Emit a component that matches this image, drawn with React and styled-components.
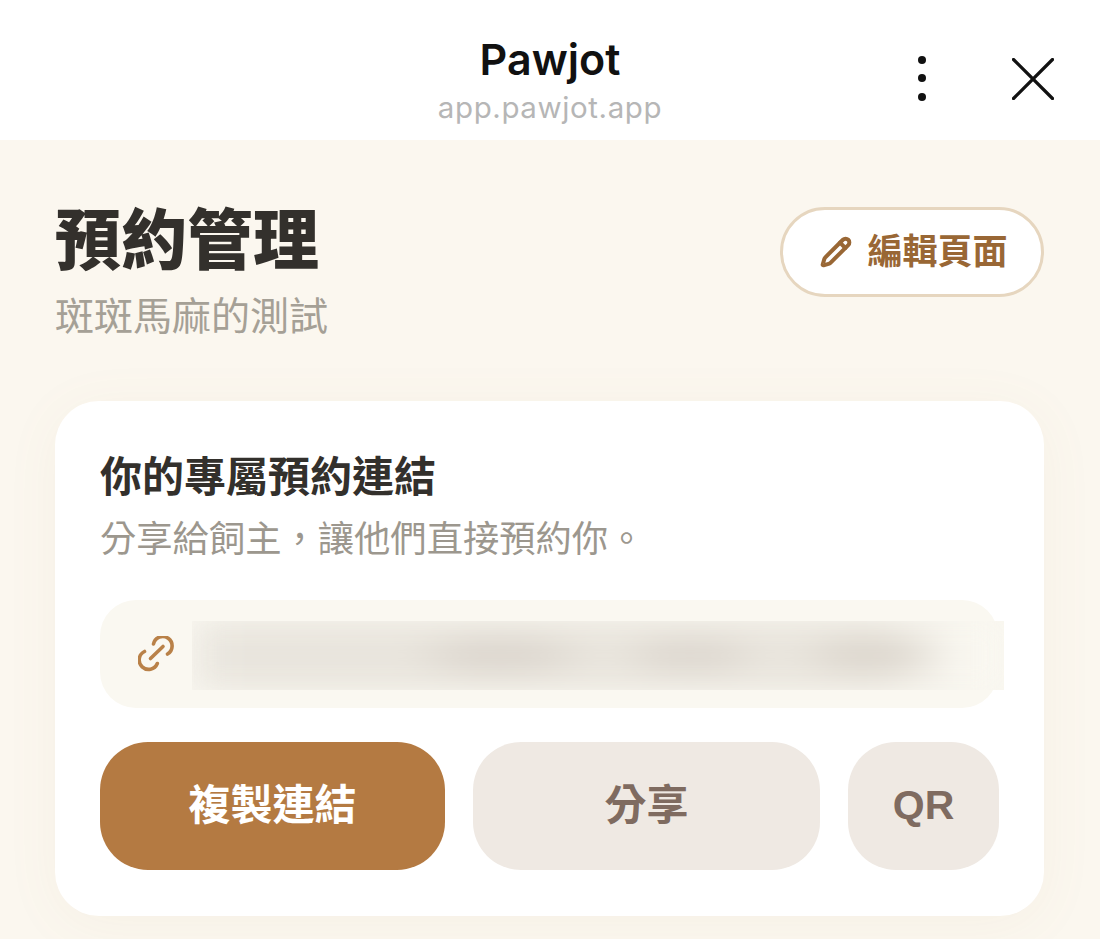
import React from "react";
import styled, { createGlobalStyle } from "styled-components";
import { Pencil } from "lucide-react";

const CJK = `"Noto Sans CJK TC", "Noto Sans", sans-serif`;

const GlobalStyle = createGlobalStyle`
  html, body { margin: 0; padding: 0; background: #fbf7ef; }
  * { box-sizing: border-box; }
`;

const Page = styled.div`
  width: 1100px;
  height: 939px;
  overflow: hidden;
  background: #fbf7ef;
  font-family: ${CJK};
`;

const TopBar = styled.header`
  height: 140px;
  background: #fff;
  display: grid;
  grid-template-columns: 1fr auto 1fr;
  align-items: center;
`;

const TopTitle = styled.div`
  grid-column: 2;
  display: flex;
  flex-direction: column;
  align-items: center;
  padding-top: 20px;
`;

const AppName = styled.div`
  font-family: Inter, sans-serif;
  font-weight: 600;
  font-size: 43px;
  line-height: 50px;
  color: #111;
`;

const AppUrl = styled.div`
  margin-top: 4px;
  font-family: Inter, sans-serif;
  font-size: 29.5px;
  line-height: 38px;
  letter-spacing: 0.6px;
  color: #b6b6b6;
`;

const TopActions = styled.div`
  grid-column: 3;
  display: flex;
  justify-content: flex-end;
  align-items: center;
  gap: 85px;
  padding: 17px 46px 0 0;
`;

const Content = styled.main`
  padding: 57px 56px 0 55px;
`;

const Heading = styled.div`
  display: flex;
  justify-content: space-between;
  align-items: flex-start;
`;

const Title = styled.h1`
  margin: 0;
  font-size: 66px;
  line-height: 76px;
  font-weight: 900;
  color: #33302c;
`;

const Subtitle = styled.p`
  margin: 14px 0 0;
  font-size: 39px;
  line-height: 52px;
  font-weight: 400;
  color: #a5a096;
`;

const EditButton = styled.button`
  width: 264px;
  height: 90px;
  margin-top: 10px;
  padding: 0 0 7px 4px;
  display: flex;
  align-items: center;
  justify-content: center;
  gap: 15px;
  background: #fff;
  border: 3px solid #e6d6bf;
  border-radius: 45px;
  font-family: ${CJK};
  font-size: 35px;
  font-weight: 700;
  color: #996735;
`;

const PencilGlyph = styled(Pencil)`
  position: relative;
  top: 3px;
`;

const Card = styled.section`
  margin-top: 62px;
  height: 515px;
  background: #fff;
  border-radius: 44px;
  padding: 44px 45px 0;
  box-shadow: 0 8px 56px rgba(165, 130, 85, 0.06);
`;

const CardTitle = styled.h2`
  margin: 0;
  font-size: 42px;
  line-height: 58px;
  font-weight: 700;
  color: #33302c;
`;

const CardText = styled.p`
  margin: 8px 0 0;
  font-size: 36.3px;
  line-height: 50px;
  color: #9c978e;
`;

const LinkField = styled.div`
  margin-top: 39px;
  width: 898px;
  height: 108px;
  display: flex;
  align-items: center;
  padding-left: 38px;
  background: #faf8f1;
  border-radius: 36px;
`;

const LinkGlyph = styled.svg`
  flex: none;
`;

const BlurredUrl = styled.div`
  flex: none;
  width: 812px;
  height: 69px;
  margin-left: 18px;
  overflow: hidden;
  background: #f9f7f0;
  position: relative;
  top: 1px;
`;

const UrlSmear = styled.div`
  width: 100%;
  height: 100%;
  filter: blur(14px);
  background:
    radial-gradient(ellipse 100px 24px at 308px 34px, #dcd6ce 0 40%, transparent 100%),
    radial-gradient(ellipse 80px 22px at 498px 34px, #ddd7cf 0 40%, transparent 100%),
    radial-gradient(ellipse 80px 22px at 678px 34px, #dcd6cd 0 40%, transparent 100%),
    linear-gradient(90deg, #eeebe4 0, #e9e5dd 6%, #e9e5dd 84%, #f9f7f0 96%);
`;

const Buttons = styled.div`
  margin-top: 34px;
  display: grid;
  grid-template-columns: 345px 347px 151px;
  column-gap: 28px;
`;

const ActionButton = styled.button`
  height: 128px;
  border: none;
  border-radius: 48px;
  padding: 0 0 ${(p) => (p.$latin ? "2px" : "10px")};
  font-family: ${(p) => (p.$latin ? `"Liberation Sans", sans-serif` : CJK)};
  font-size: ${(p) => (p.$latin ? "41px" : "42px")};
  font-weight: 700;
  color: ${(p) => (p.$primary ? "#fff" : "#7f6b60")};
  background: ${(p) => (p.$primary ? "#b47a42" : "#efe9e3")};
`;

const DotsIcon = () => (
  <svg width="10" height="48" viewBox="0 0 10 48" fill="#111">
    <circle cx="5" cy="5" r="4" />
    <circle cx="5" cy="23" r="4" />
    <circle cx="5" cy="42" r="4" />
  </svg>
);

const CloseIcon = () => (
  <svg width="42" height="42" viewBox="0 0 42 42" stroke="#111" strokeWidth="3.2" strokeLinecap="round">
    <path d="M1.5 1.5 40.5 40.5M40.5 1.5 1.5 40.5" />
  </svg>
);

const LinkIcon = () => (
  <LinkGlyph width="36" height="36" viewBox="0 0 36 36" fill="none" stroke="#b98148" strokeWidth="3.6" strokeLinecap="round">
    <path d="M15.5 8A9.4 9.4 0 1 1 29.5 18" />
    <path d="M19.3 27.5A9.4 9.4 0 1 1 6.5 15.5" />
    <path d="M12.5 22.5 25 10.5" />
  </LinkGlyph>
);

export default function App() {
  return (
    <Page>
      <GlobalStyle />
      <TopBar>
        <TopTitle>
          <AppName>Pawjot</AppName>
          <AppUrl>app.pawjot.app</AppUrl>
        </TopTitle>
        <TopActions>
          <DotsIcon />
          <CloseIcon />
        </TopActions>
      </TopBar>
      <Content>
        <Heading>
          <div>
            <Title>預約管理</Title>
            <Subtitle>斑斑馬麻的測試</Subtitle>
          </div>
          <EditButton>
            <PencilGlyph size={32} strokeWidth={3} color="#996735" />
            編輯頁面
          </EditButton>
        </Heading>
        <Card>
          <CardTitle>你的專屬預約連結</CardTitle>
          <CardText>分享給飼主，讓他們直接預約你。</CardText>
          <LinkField>
            <LinkIcon />
            <BlurredUrl>
              <UrlSmear />
            </BlurredUrl>
          </LinkField>
          <Buttons>
            <ActionButton $primary>複製連結</ActionButton>
            <ActionButton>分享</ActionButton>
            <ActionButton $latin>QR</ActionButton>
          </Buttons>
        </Card>
      </Content>
    </Page>
  );
}
